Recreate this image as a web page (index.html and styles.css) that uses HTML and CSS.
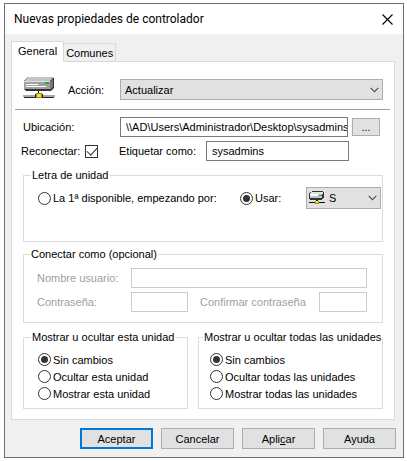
FILE: index.html
```html
<!DOCTYPE html>
<html lang="es">
<head>
<meta charset="utf-8">
<title>Nuevas propiedades de controlador</title>
<link rel="stylesheet" href="styles.css">
</head>
<body>
<svg class="defs" aria-hidden="true">
  <symbol id="drive" viewBox="0 0 32 25">
    <path d="M5 0h22l4 1v10l-3 3H3l-2-2V4z" fill="#333"/>
    <path d="M5 0h22l3 1-4 4H1z" fill="#c4c4c4"/>
    <path d="M1 4h26v8H1z" fill="#a0a0a0"/>
    <path d="M27 5l3-3v8l-3 3z" fill="#777"/>
    <path d="M1 4h26v1H1z" fill="#e0e0e0"/>
    <path d="M3 7h12v1H3zM3 9h20v1H3z" fill="#fff"/>
    <path d="M22 5h4v2h-4z" fill="#0b3"/>
    <path d="M15 14h1v3h-1z" fill="#111"/>
    <path d="M0 18h12v2H0zM20 18h12v2H20z" fill="#aaa"/>
    <path d="M1 20h11v1H1zM20 20h11v1H20zM12 17h1v4h-1zM19 17h1v4h-1z" fill="#222"/>
    <path d="M13 16h6v5h-6z" fill="#a58700"/>
    <path d="M14 17h4v3h-4z" fill="#f5d84a"/>
  </symbol>
  <symbol id="drive-small" viewBox="0 0 16 14" shape-rendering="crispEdges">
    <path d="M3 0h11v1h1v6h-1v1h-1v1H1V8H0V2h1V1h2z" fill="#333"/>
    <path d="M3 1h11v1l-1 1H1V2z" fill="#e4e4e4"/>
    <path d="M1 3h12v4H1z" fill="#c4c4c4"/>
    <path d="M1 3h8v2H1z" fill="#fff"/>
    <path d="M10 4h3v1h-3z" fill="#0b3"/>
    <path d="M7 9h2v1H7zM0 11h16v1H0z" fill="#111"/>
    <path d="M6 10h4v3H6z" fill="#b89b00"/>
    <path d="M7 10h2v2H7z" fill="#ffe23c"/>
  </symbol>
  <symbol id="chevron" viewBox="0 0 9 6">
    <path d="M.7.8 4.5 4.6 8.3.8" fill="none" stroke="#505050" stroke-width="1.2"/>
  </symbol>
</svg>
<main class="window">
  <header class="titlebar">
    <h1 class="title">Nuevas propiedades de controlador</h1>
    <button class="close" type="button" aria-label="Cerrar">
      <svg width="11" height="11" viewBox="0 0 11 11"><path d="M.5.5l10 10M10.500.5l-10 10" stroke="#000" stroke-width="1.1"/></svg>
    </button>
  </header>
  <form class="body">
    <div class="tabs" role="tablist">
      <button class="tab tab-active" type="button" role="tab" aria-selected="true">General</button>
      <button class="tab" type="button" role="tab" aria-selected="false">Comunes</button>
    </div>
    <section class="panel" role="tabpanel">
      <div class="row action">
        <svg class="action-icon" width="32" height="25"><use href="#drive"/></svg>
        <label class="action-label" for="accion">Acción:</label>
        <span class="combo combo-wide">
          <select id="accion"><option>Actualizar</option></select>
          <svg class="chevron" width="9" height="6"><use href="#chevron"/></svg>
        </span>
      </div>
      <hr class="separator">
      <div class="row location">
        <label class="location-label" for="ubicacion">Ubicación:</label>
        <input class="field location-field" id="ubicacion" type="text" value="\\AD\Users\Administrador\Desktop\sysadmins">
        <button class="button browse" type="button">...</button>
      </div>
      <div class="row reconnect">
        <label class="check-label" for="reconectar">Reconectar:</label>
        <input class="check" id="reconectar" type="checkbox" checked>
        <label class="tag-label" for="etiqueta">Etiquetar como:</label>
        <input class="field tag-field" id="etiqueta" type="text" value="sysadmins">
      </div>
      <fieldset class="group letter">
        <legend>Letra de unidad</legend>
        <div class="row">
          <label class="option letter-first"><input class="radio" type="radio" name="letra">La 1ª disponible, empezando por:</label>
          <label class="option letter-use"><input class="radio" type="radio" name="letra" checked>Usar:</label>
          <span class="combo combo-drive">
            <select aria-label="Unidad"><option>S</option></select>
            <svg class="drive-icon" width="16" height="14"><use href="#drive-small"/></svg>
            <svg class="chevron" width="9" height="6"><use href="#chevron"/></svg>
          </span>
        </div>
      </fieldset>
      <fieldset class="group connect">
        <legend>Conectar como (opcional)</legend>
        <div class="row">
          <label class="connect-label" for="usuario">Nombre usuario:</label>
          <input class="field user-field" id="usuario" type="text" disabled>
        </div>
        <div class="row">
          <label class="connect-label" for="clave">Contraseña:</label>
          <input class="field pass-field" id="clave" type="password" disabled>
          <label class="confirm-label" for="confirmar">Confirmar contraseña</label>
          <input class="field confirm-field" id="confirmar" type="password" disabled>
        </div>
      </fieldset>
      <div class="groups">
        <fieldset class="group visibility this-drive">
          <legend>Mostrar u ocultar esta unidad</legend>
          <label class="option"><input class="radio" type="radio" name="esta" checked>Sin cambios</label>
          <label class="option"><input class="radio" type="radio" name="esta">Ocultar esta unidad</label>
          <label class="option"><input class="radio" type="radio" name="esta">Mostrar esta unidad</label>
        </fieldset>
        <fieldset class="group visibility all-drives">
          <legend>Mostrar u ocultar todas las unidades</legend>
          <label class="option"><input class="radio" type="radio" name="todas" checked>Sin cambios</label>
          <label class="option"><input class="radio" type="radio" name="todas">Ocultar todas las unidades</label>
          <label class="option"><input class="radio" type="radio" name="todas">Mostrar todas las unidades</label>
        </fieldset>
      </div>
    </section>
    <footer class="actions">
      <button class="button button-default" type="button">Aceptar</button>
      <button class="button" type="button">Cancelar</button>
      <button class="button" type="button">Apli<u>c</u>ar</button>
      <button class="button" type="button">Ayuda</button>
    </footer>
  </form>
</main>
</body>
</html>
```
FILE: styles.css
```css
* { box-sizing: border-box; }

body {
  margin: 0;
  padding: 3px 3px 2px 4px;
  background: #fff;
  color: #000;
  font: 11px/14px "Liberation Sans", sans-serif;
}

input, select, button { font: inherit; color: inherit; margin: 0; }

.defs { display: none; }

.window { border: 1px solid #6e6e6e; background: #f0f0f0; }

.titlebar {
  display: flex;
  align-items: center;
  justify-content: space-between;
  height: 30px;
  padding: 0 10px 0 9px;
  background: #fff;
}
.title { margin: 0; font: 12px/16px Roboto, sans-serif; }
.close { display: flex; padding: 0; border: 0; background: none; }

.body { padding: 7px 7px 8px 6px; }

.tabs { display: flex; align-items: flex-end; }
.tab {
  min-width: 52px;
  height: 18px;
  padding: 0 2px;
  border: 1px solid #d9d9d9;
  border-width: 1px 1px 0 0;
  background: #f0f0f0;
}
.tab-active {
  position: relative;
  height: 21px;
  margin-bottom: -1px;
  padding: 0 6px 3px;
  border-width: 1px 1px 0;
  background: #fff;
}

.panel {
  margin-right: 1px;
  padding: 10px 11px;
  border: 1px solid #d9d9d9;
  background: #fff;
}

.row { display: flex; align-items: center; }

.action { height: 35px; }
.action-icon { flex: none; margin-right: 13px; }
.action-label { width: 52px; }

.combo { display: grid; align-items: center; }
.combo > * { grid-area: 1 / 1; }
.combo select {
  appearance: none;
  width: 100%;
  height: 21px;
  padding: 0 20px 0 4px;
  border: 1px solid #adadad;
  border-radius: 0;
  background: #e1e1e1;
}
.combo svg { pointer-events: none; }
.chevron { justify-self: end; margin-right: 4px; }
.combo-wide { flex: 1; }
.drive-icon { margin-left: 3px; }

.separator {
  height: 1px;
  margin: 2px -7px 7px -8px;
  border: 0;
  background: #a0a0a0;
}

.field {
  min-width: 0;
  height: 20px;
  padding: 0 0 0 5px;
  border: 1px solid #7a7a7a;
  border-radius: 0;
  background: #fff;
}
.field:disabled { border-color: #ccc; }

.location-label { width: 97px; }
.location-field { flex: 1; }

.button {
  height: 21px;
  padding: 0;
  border: 1px solid #adadad;
  background: #e1e1e1;
}
.browse { width: 28px; height: 18px; margin: 0 3px 0 4px; }

.reconnect { margin: 4px 34px 7px -2px; }
.check-label { width: 64px; }
.check, .radio {
  appearance: none;
  flex: none;
  width: 13px;
  height: 13px;
  border: 1px solid #333;
  background: #fff;
}
.check { display: grid; place-items: center; margin-right: 21px; }
.check:checked::before {
  content: "";
  width: 9px;
  height: 5px;
  border: solid #333;
  border-width: 0 0 1px 1px;
  transform: translateY(-1px) rotate(-47deg);
}
.tag-label { width: 87px; }
.tag-field { flex: 1; }

.radio { display: grid; place-items: center; border-radius: 50%; }
.radio:checked::before {
  content: "";
  width: 7px;
  height: 7px;
  border-radius: 50%;
  background: #333;
}

.group {
  min-width: 0;
  margin: 0;
  padding: 0 14px;
  border: 1px solid #dcdcdc;
}
.group legend { margin-left: -7px; padding: 0 1px; white-space: nowrap; }

.option { display: flex; align-items: center; gap: 2px; }

.letter { height: 74px; padding: 5px 1px 0 14px; }
.letter-first { width: 202px; }
.letter-use { flex: 1; }
.combo-drive { width: 75px; }
.combo-drive select { height: 22px; padding-left: 22px; }

.connect { margin-top: 5px; padding: 7px 15px 10px 13px; color: #a0a0a0; }
.connect legend { color: #000; }
.connect .row + .row { margin-top: 4px; }
.connect-label { width: 94px; }
.user-field { flex: 1; }
.pass-field { width: 57px; }
.confirm-label { flex: 1; margin-left: 12px; }
.confirm-field { width: 48px; }

.groups { display: grid; grid-template-columns: 165fr 185fr; gap: 10px; margin-top: 7px; }
.visibility { padding: 7px 0 6px 14px; }
.visibility .option { height: 17px; white-space: nowrap; }
.all-drives { padding-left: 11px; }

.actions { display: flex; justify-content: flex-end; gap: 8px; margin-top: 8px; }
.actions .button { width: 73px; }
.actions .button-default { border: 2px solid #0078d7; }
```
